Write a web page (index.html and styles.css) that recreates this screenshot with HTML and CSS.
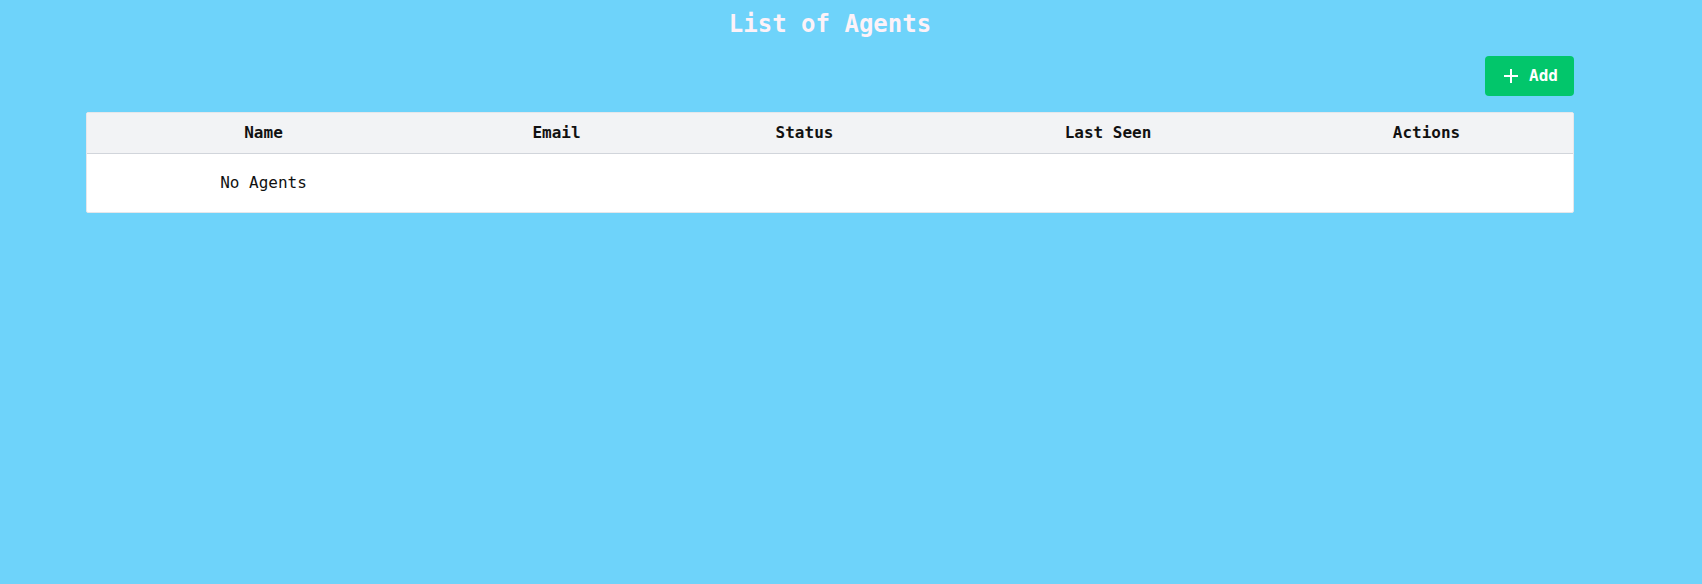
FILE: index.html
```html
<!DOCTYPE html>
<html>
<head>
<meta charset="utf-8">
<title>List of Agents</title>
<link rel="stylesheet" href="styles.css">
</head>
<body>
<div class="page">
  <h1 class="title">List of Agents</h1>
  <div class="toolbar">
    <button class="btn-add">
      <svg class="plus" width="14" height="14" viewBox="0 0 14 14"><path d="M7 0v14M0 7h14" stroke="#fff" stroke-width="2" fill="none"/></svg>
      <span>Add</span>
    </button>
  </div>
  <div class="table-wrap">
    <table class="agents">
      <thead>
        <tr>
          <th class="c-name">Name</th>
          <th class="c-email">Email</th>
          <th class="c-status">Status</th>
          <th class="c-seen">Last Seen</th>
          <th class="c-actions">Actions</th>
        </tr>
      </thead>
      <tbody>
        <tr>
          <td class="empty">No Agents</td>
          <td></td><td></td><td></td><td></td>
        </tr>
      </tbody>
    </table>
  </div>
</div>
</body>
</html>
```
FILE: styles.css
```css
html, body {
  margin: 0;
  padding: 0;
  background: #6ed3fa;
  height: 100%;
}
body {
  font-family: "DejaVu Sans Mono", monospace;
  color: #111;
}
.page {
  width: 1488px;
  margin-left: 86px;
  padding-top: 10px;
}
.title {
  margin: 0;
  font-size: 24px;
  line-height: 28px;
  font-weight: bold;
  color: #fdf2f8;
  text-align: center;
}
.toolbar {
  display: flex;
  justify-content: flex-end;
  margin-top: 18px;
}
.btn-add {
  display: flex;
  align-items: center;
  gap: 11px;
  height: 40px;
  width: 89px;
  padding: 0 0 1px 19px;
  border: none;
  border-radius: 4px;
  background: #02c66b;
  color: #fff;
  font-family: "DejaVu Sans Mono", monospace;
  font-weight: bold;
  font-size: 16px;
}
.plus { display: block; }
.table-wrap {
  margin-top: 16px;
  background: #fff;
  border: 1px solid #e5e7eb;
  border-radius: 2px;
  overflow: hidden;
  width: 1486px;
}
.agents {
  width: 100%;
  border-collapse: collapse;
  table-layout: fixed;
}
.agents th {
  background: #f2f3f5;
  font-weight: bold;
  font-size: 16px;
  line-height: 18px;
  padding: 11px 0;
  border-bottom: 1px solid #d1d5db;
  text-align: center;
}
.c-name { width: 353px; }
.c-email { width: 233px; }
.c-status { width: 263px; }
.c-seen { width: 344px; }
.c-actions { width: 293px; }
.agents td {
  font-size: 16px;
  line-height: 18px;
  padding: 20px 0;
  text-align: center;
  color: #111;
}
```
